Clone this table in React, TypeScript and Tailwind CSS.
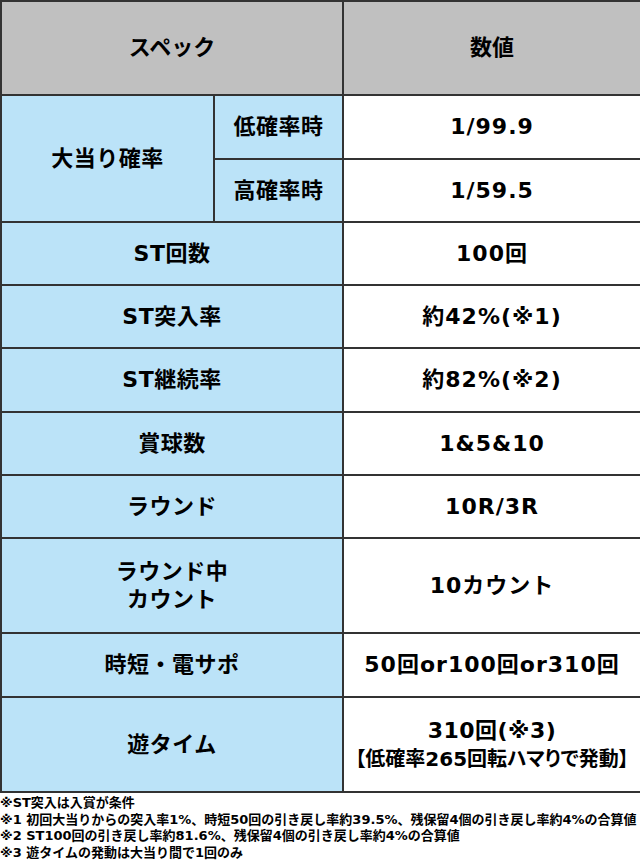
import React from "react";

const font = { fontFamily: '"DejaVu Sans", "Noto Sans CJK JP", sans-serif' };

const rows: { label: React.ReactNode; value: React.ReactNode; h: string }[] = [
  { label: "ST回数", value: "100回", h: "h-[63px]" },
  { label: "ST突入率", value: "約42%(※1)", h: "h-[63px]" },
  { label: "ST継続率", value: "約82%(※2)", h: "h-[64px]" },
  { label: "賞球数", value: "1&5&10", h: "h-[63px]" },
  { label: "ラウンド", value: "10R/3R", h: "h-[63px]" },
  { label: (<>ラウンド中<br />カウント</>), value: "10カウント", h: "h-[95px]" },
  { label: "時短・電サポ", value: "50回or100回or310回", h: "h-[64px]" },
  {
    label: "遊タイム",
    value: (
      <>
        <span className="tracking-[0.5px]">310回(※3)</span>
        <br />
        <span className="text-[20px] tracking-normal whitespace-nowrap [font-feature-settings:'palt']">
          【低確率265回転ハマりで発動】
        </span>
      </>
    ),
    h: "h-[95px]",
  },
];

export default function App() {
  const cell = "border-2 border-[#333] text-center align-middle font-bold text-[22px] leading-[28px] text-black";
  const lab = `${cell} bg-[#bbe3f8] tracking-[0.5px]`;
  const val = `${cell} bg-white tracking-[1px]`;
  return (
    <div className="w-[640px] h-[861px] bg-white overflow-hidden" style={font}>
      <table className="w-[640px] border-collapse table-fixed">
        <colgroup>
          <col className="w-[213px]" />
          <col className="w-[129px]" />
          <col className="w-[298px]" />
        </colgroup>
        <tbody>
          <tr>
            <td colSpan={2} className={`${cell} bg-[#c0c0c0] h-[94px]`}>スペック</td>
            <td className={`${cell} bg-[#c0c0c0]`}>数値</td>
          </tr>
          <tr>
            <td rowSpan={2} className={lab}>大当り確率</td>
            <td className={`${lab} h-[64px]`}>低確率時</td>
            <td className={val}>1/99.9</td>
          </tr>
          <tr>
            <td className={`${lab} h-[63px]`}>高確率時</td>
            <td className={val}>1/59.5</td>
          </tr>
          {rows.map((r, i) => (
            <tr key={i}>
              <td colSpan={2} className={`${lab} ${r.h}`}>{r.label}</td>
              <td className={val}>{r.value}</td>
            </tr>
          ))}
        </tbody>
      </table>
      <div className="pt-[2px] text-[13px] leading-[16.5px] font-bold text-black whitespace-nowrap">
        <div>※ST突入は入賞が条件</div>
        <div>※1 初回大当りからの突入率1%、時短50回の引き戻し率約39.5%、残保留4個の引き戻し率約4%の合算値</div>
        <div>※2 ST100回の引き戻し率約81.6%、残保留4個の引き戻し率約4%の合算値</div>
        <div>※3 遊タイムの発動は大当り間で1回のみ</div>
      </div>
    </div>
  );
}
